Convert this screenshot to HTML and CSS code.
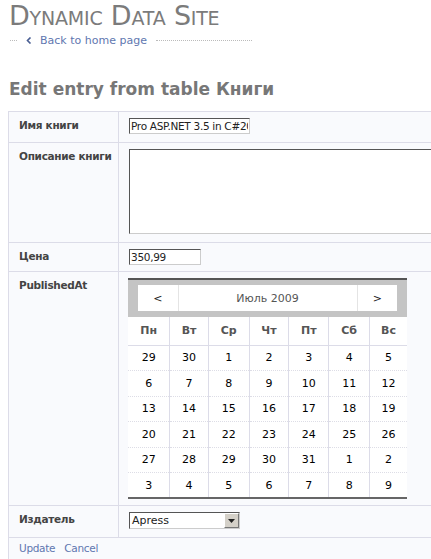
FILE: index.html
```html
<!DOCTYPE html>
<html>
  <head>
    <meta charset="UTF-8">
    <title>Dynamic Data Site</title>
    <link rel="stylesheet" href="styles.css">
  </head>
  <body>
    <div class="site-title">Dynamic Data Site</div>
    <div class="back">
      <span class="dots dots-short"></span>
      <a href="#" class="back-link">
        <svg class="chev" width="6" height="7" viewBox="0 0 6 7"><polyline points="4.5,0.5 1.5,3.5 4.5,6.5" fill="none" stroke="#4a5f93" stroke-width="1.6"/></svg>
        Back to home page
      </a>
      <span class="dots dots-long"></span>
    </div>

    <h2 class="page-title">Edit entry from table Книги</h2>

    <table class="detail">
      <tr class="row-name">
        <th>Имя книги</th>
        <td><input class="text name" type="text" value="Pro ASP.NET 3.5 in C#2008"></td>
      </tr>
      <tr class="row-desc">
        <th>Описание книги</th>
        <td><textarea class="text desc"></textarea></td>
      </tr>
      <tr class="row-price">
        <th>Цена</th>
        <td><input class="text price" type="text" value="350,99"></td>
      </tr>
      <tr class="row-date">
        <th>PublishedAt</th>
        <td>
          <table class="cal">
            <tr class="cal-head">
              <td colspan="7">
                <table class="cal-nav">
                  <tr>
                    <td class="nav-btn">&lt;</td>
                    <td class="nav-title">Июль 2009</td>
                    <td class="nav-btn">&gt;</td>
                  </tr>
                </table>
              </td>
            </tr>
            <tr class="cal-dow">
              <th>Пн</th><th>Вт</th><th>Ср</th><th>Чт</th><th>Пт</th><th>Сб</th><th>Вс</th>
            </tr>
            <tr class="cal-day"><td>29</td><td>30</td><td>1</td><td>2</td><td>3</td><td>4</td><td>5</td></tr>
            <tr class="cal-day"><td>6</td><td>7</td><td>8</td><td>9</td><td>10</td><td>11</td><td>12</td></tr>
            <tr class="cal-day"><td>13</td><td>14</td><td>15</td><td>16</td><td>17</td><td>18</td><td>19</td></tr>
            <tr class="cal-day"><td>20</td><td>21</td><td>22</td><td>23</td><td>24</td><td>25</td><td>26</td></tr>
            <tr class="cal-day"><td>27</td><td>28</td><td>29</td><td>30</td><td>31</td><td>1</td><td>2</td></tr>
            <tr class="cal-day"><td>3</td><td>4</td><td>5</td><td>6</td><td>7</td><td>8</td><td>9</td></tr>
          </table>
        </td>
      </tr>
      <tr class="row-pub">
        <th>Издатель</th>
        <td>
          <div class="select">
            <span class="select-value">Apress</span>
            <span class="select-btn">
              <svg width="7" height="4" viewBox="0 0 7 4"><polygon points="0,0 7,0 3.5,4" fill="#222"/></svg>
            </span>
          </div>
        </td>
      </tr>
      <tr class="row-actions">
        <td colspan="2">
          <a href="#" class="action">Update</a>
          <a href="#" class="action">Cancel</a>
        </td>
      </tr>
    </table>
    <div class="page-end"></div>
  </body>
</html>
```

FILE: styles.css
```css
* { margin: 0; padding: 0; box-sizing: border-box; }
html { overflow: hidden; }
body { margin: 0 0 0 8px; background: #fff; color: #000; font-family: "DejaVu Sans", Tahoma, sans-serif; font-size: 11px; }
a { text-decoration: none; color: #5f77b0; }

.site-title { font-size: 27px; line-height: 32px; color: #7b7b7b; font-variant: small-caps; letter-spacing: -0.2px; padding-left: 1px; }

.back { display: flex; align-items: center; height: 16px; margin-top: 0; }
.dots { border-top: 1px dotted #bbb; height: 0; }
.dots-short { width: 7px; margin-left: 2px; }
.dots-long { width: 96px; margin-left: 9px; }
.back-link { display: flex; align-items: center; font-size: 11px; margin-left: 9px; }
.chev { margin-right: 8px; }

.page-title { font-size: 17px; line-height: 22px; font-weight: bold; color: #777; margin-top: 30px; margin-bottom: 11px; padding-left: 1px; }

.detail { border-collapse: collapse; width: 520px; }
.detail > tbody > tr > th,
.detail > tbody > tr > td { border: 1px solid #dcdce8; background: #f9fafd; vertical-align: top; padding: 6px 10px 8px; }
.detail > tbody > tr > th { width: 110px; padding-right: 2px; text-align: left; color: #444; font-weight: bold; font-size: 10.5px; letter-spacing: -0.3px; line-height: 14px; white-space: nowrap; }
.row-price > th, .row-price > td { padding-bottom: 6px !important; }
.row-date > th, .row-date > td { padding-bottom: 6px !important; }

.text { display: block; background: #fff; border: 1px solid; border-color: #555 #ccc #ccc #555; font-family: inherit; font-size: 10.5px; letter-spacing: -0.3px; color: #222; padding: 0 1px; }
.name { width: 121px; height: 16px; }
.price { width: 72px; height: 16px; }
.desc { width: 330px; height: 85px; resize: none; }

.cal { border-collapse: collapse; width: 279px; background: #fff; border-top: 2px solid #555; border-bottom: 2px solid #666; margin-left: -1px; }
.cal-head > td { background: #c4c4c4; padding: 5px 10px 6px; }
.cal-nav { border-collapse: collapse; width: 100%; background: #fff; }
.cal-nav td { height: 26px; text-align: center; color: #555; border-left: 1px solid #e4e4e4; }
.cal-nav td:first-child { border-left: none; }
.cal-nav .nav-btn { width: 40px; color: #222; }
.cal-dow th { height: 28px; color: #555; font-weight: bold; border-left: 1px solid #dcdce8; border-bottom: 1px solid #dcdce8; }
.cal-day td { height: 25.5px; text-align: center; border-left: 1px solid #dcdce8; border-top: 1px dotted #dddde6; }
.cal-dow th:first-child, .cal-day td:first-child { border-left: none; }
.cal-dow th:last-child, .cal-day td:last-child { border-right: none; }

.select { display: flex; width: 111px; height: 17px; background: #fff; border: 1px solid; border-color: #555 #ccc #ccc #555; }
.select-value { flex: 1; padding-left: 2px; line-height: 15px; color: #222; }
.select-btn { width: 15px; display: flex; align-items: center; justify-content: center; background: #d4d0c8; border: 1px solid; border-color: #fff #777 #777 #fff; }

.row-actions > td { border-bottom: none !important; border-right: none !important; padding: 3px 10px 4px !important; font-size: 10.5px; letter-spacing: -0.3px; line-height: 14px; }
.action { margin-right: 6px; }

.page-end { border-top: 2px solid #ccc; margin-left: -8px; }
```
